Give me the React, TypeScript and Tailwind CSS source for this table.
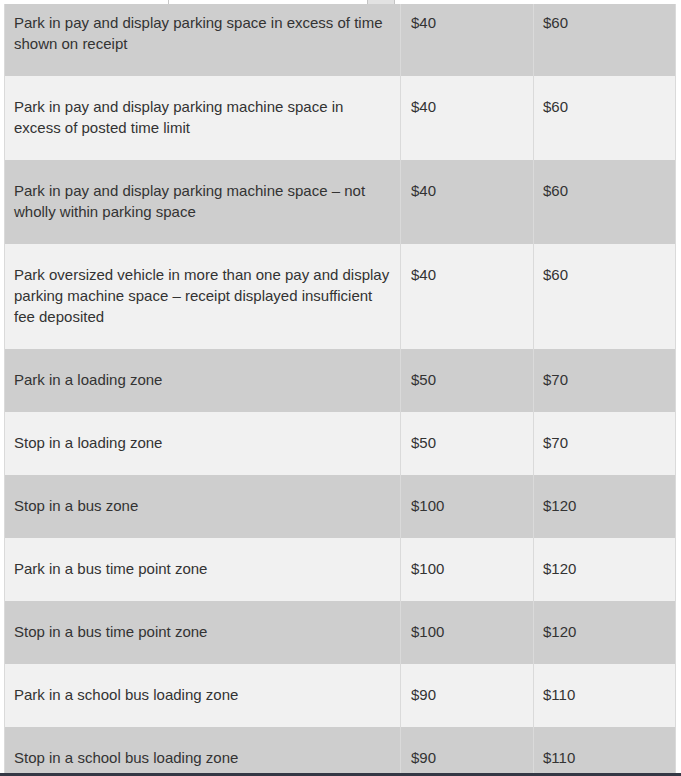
const rows = [
  { text: 'Park in pay and display parking space in excess of time shown on receipt', early: '$40', late: '$60' },
  { text: 'Park in pay and display parking machine space in excess of posted time limit', early: '$40', late: '$60' },
  { text: 'Park in pay and display parking machine space – not wholly within parking space', early: '$40', late: '$60' },
  { text: 'Park oversized vehicle in more than one pay and display parking machine space – receipt displayed insufficient fee deposited', early: '$40', late: '$60' },
  { text: 'Park in a loading zone', early: '$50', late: '$70' },
  { text: 'Stop in a loading zone', early: '$50', late: '$70' },
  { text: 'Stop in a bus zone', early: '$100', late: '$120' },
  { text: 'Park in a bus time point zone', early: '$100', late: '$120' },
  { text: 'Stop in a bus time point zone', early: '$100', late: '$120' },
  { text: 'Park in a school bus loading zone', early: '$90', late: '$110' },
  { text: 'Stop in a school bus loading zone', early: '$90', late: '$110' },
]

export default function App() {
  return (
    <div className="h-[776px] w-[681px] flex flex-col overflow-hidden bg-white font-['Liberation_Sans',Arial,sans-serif] text-[15px] leading-[21px] text-[#333]">
      {/* bottom edge of the control sitting above the table */}
      <div className="h-[4px] flex shrink-0">
        <div className="w-[168px]" />
        <div className="w-[199px] border-l border-[#c8c8c8]" />
        <div className="w-[28px] bg-[#e2e2e2] border-x border-[#c4c4c4]" />
      </div>

      <div className="flex-1 overflow-hidden pl-[4px]">
        <table className="w-[671px] border-collapse table-fixed">
          <colgroup>
            <col className="w-[396px]" />
            <col className="w-[133px]" />
            <col className="w-[142px]" />
          </colgroup>
          <tbody>
            {rows.map((r, i) => (
              <tr key={i} className={i % 2 === 0 ? 'bg-[#cecece]' : 'bg-[#f1f1f1]'}>
                <td className={`align-top border-x border-[#dadada] pl-[9px] pr-[9px] pb-[22px] ${i === 0 ? 'pt-[8px]' : 'pt-[20px]'}`}>
                  {r.text}
                </td>
                <td className={`align-top border-x border-[#dadada] pl-[10px] pr-[9px] pb-[22px] ${i === 0 ? 'pt-[8px]' : 'pt-[20px]'}`}>
                  {r.early}
                </td>
                <td className={`align-top border-x border-[#dadada] pl-[9px] pr-[9px] pb-[22px] ${i === 0 ? 'pt-[8px]' : 'pt-[20px]'}`}>
                  {r.late}
                </td>
              </tr>
            ))}
          </tbody>
        </table>
      </div>

      <div className="h-[3px] shrink-0 bg-[#343845]" />
    </div>
  )
}
